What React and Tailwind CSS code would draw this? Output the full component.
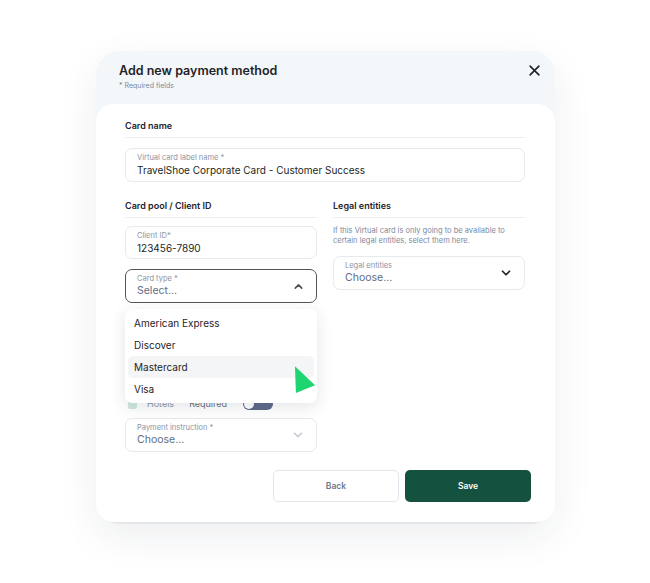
import React from 'react';

function ChevronDown({ className = '' }) {
  return (
    <svg viewBox="0 0 24 24" className={className} fill="none" stroke="currentColor" strokeWidth="3" strokeLinecap="round" strokeLinejoin="round">
      <path d="M6 9l6 6 6-6" />
    </svg>
  );
}

function ChevronUp({ className = '' }) {
  return (
    <svg viewBox="0 0 24 24" className={className} fill="none" stroke="currentColor" strokeWidth="3" strokeLinecap="round" strokeLinejoin="round">
      <path d="M6 15l6-6 6 6" />
    </svg>
  );
}

function Field({ label, value, placeholder, chevron, active, faded, h = 'h-[34px]' }) {
  return (
    <div
      className={`${h} flex items-center justify-between rounded-[7px] bg-white px-[11px] ${
        active ? 'border border-[#50555c]' : 'border border-[#e6e9ee]'
      }`}
    >
      <div className="flex flex-col">
        <span className="text-[7.5px] leading-[10px] text-[#8a94a6]">{label}</span>
        {value ? (
          <span className="text-[10px] leading-[14px] text-[#1c1f23]">{value}</span>
        ) : (
          <span className="text-[10.5px] leading-[14px] text-[#5f6d82]">{placeholder}</span>
        )}
      </div>
      {chevron === 'down' && (
        <ChevronDown className={`h-[14px] w-[14px] ${faded ? 'text-[#c5cad3]' : 'text-[#1f2328]'}`} />
      )}
      {chevron === 'up' && <ChevronUp className="h-[13px] w-[13px] text-[#4b5058]" />}
    </div>
  );
}

function SectionTitle({ children }) {
  return (
    <div className="border-b border-[#eceef1] pb-[5px] text-[9px] font-semibold leading-[12px] text-[#1f2328]">
      {children}
    </div>
  );
}

export default function App() {
  const cardTypes = ['American Express', 'Discover', 'Mastercard', 'Visa'];

  return (
    <div className="min-h-[583px] bg-white pl-[96px] pt-[51px] font-['Inter',sans-serif]">
      {/* modal */}
      <div className="w-[459px] rounded-[24px] bg-[#f3f7fa] shadow-[0_2px_0_#e4e6e9,0_14px_40px_rgba(30,40,60,0.08)]">
        {/* header */}
        <div className="flex h-[53px] items-start justify-between pl-[23px] pr-[13px] pt-[11px]">
          <div>
            <h1 className="text-[12.5px] font-semibold leading-[18px] text-[#1f2328]">Add new payment method</h1>
            <p className="mt-[1px] text-[7px] leading-[10px] text-[#7d889b]">* Required fields</p>
          </div>
          <svg viewBox="0 0 24 24" className="mt-[1px] h-[15px] w-[15px] text-[#1f2328]" fill="none" stroke="currentColor" strokeWidth="2.6" strokeLinecap="round">
            <path d="M5 5l14 14M19 5L5 19" />
          </svg>
        </div>

        {/* body */}
        <div className="rounded-[18px] bg-white pb-[20px] pl-[29px] pr-[30px] pt-[16px]">
          <SectionTitle>Card name</SectionTitle>
          <div className="mt-[10px]">
            <Field label="Virtual card label name *" value="TravelShoe Corporate Card - Customer Success" />
          </div>

          <div className="mt-[18px] grid grid-cols-2 gap-x-[16px]">
            {/* left column */}
            <div className="relative">
              <SectionTitle>Card pool / Client ID</SectionTitle>
              <div className="mt-[8px]">
                <Field label="Client ID*" value="123456-7890" h="h-[33px]" />
              </div>
              <div className="mt-[10px]">
                <Field label="Card type *" placeholder="Select..." chevron="up" active />
              </div>

              {/* partly hidden row */}
              <div className="mt-[95px] flex h-[12px] items-center pl-[3px]">
                <span className="h-[9px] w-[9px] rounded-[2px] bg-[#cfe8dc]" />
                <span className="ml-[10px] text-[9px] text-[#8c97a8]">Hotels</span>
                <span className="ml-[15px] text-[9px] text-[#6b7380]">Required</span>
                <span className="ml-[16px] flex h-[12px] w-[30px] items-center rounded-full bg-[#5e6b8a] px-[1px]">
                  <span className="h-[10px] w-[10px] rounded-full bg-white" />
                </span>
              </div>

              <div className="mt-[8px]">
                <Field label="Payment instruction *" placeholder="Choose..." chevron="down" faded />
              </div>

              {/* dropdown */}
              <div className="absolute left-0 right-0 top-[109px] z-10 rounded-[7px] bg-white px-[3px] py-[3px] shadow-[0_4px_16px_rgba(30,40,60,0.12)]">
                {cardTypes.map(t => (
                  <div
                    key={t}
                    className={`flex h-[22px] items-center rounded-[5px] px-[6px] text-[10px] text-[#1f2328] ${
                      t === 'Mastercard' ? 'bg-[#f3f5f7]' : ''
                    }`}
                  >
                    {t}
                  </div>
                ))}
              </div>

              {/* pointer */}
              <svg viewBox="0 0 24 34" className="absolute left-[169px] top-[165px] z-20 h-[33px] w-[23px]">
                <polygon points="1,1 22,21 2,29" fill="#1fd571" />
              </svg>
            </div>

            {/* right column */}
            <div>
              <SectionTitle>Legal entities</SectionTitle>
              <p className="mt-[8px] text-[7.5px] leading-[10px] text-[#7d889b]">
                If this Virtual card is only going to be available to certain legal entities, select them here.
              </p>
              <div className="mt-[10px]">
                <Field label="Legal entities" placeholder="Choose..." chevron="down" />
              </div>
            </div>
          </div>

          {/* actions */}
          <div className="-mr-[6px] mt-[18px] flex justify-end gap-[6px]">
            <button className="h-[32px] w-[126px] rounded-[5px] border border-[#e3e7ed] bg-white text-[8.5px] font-semibold text-[#6b7790]">
              Back
            </button>
            <button className="h-[32px] w-[126px] rounded-[5px] bg-[#14523f] text-[8.5px] font-semibold text-white">
              Save
            </button>
          </div>
        </div>
      </div>
    </div>
  );
}
